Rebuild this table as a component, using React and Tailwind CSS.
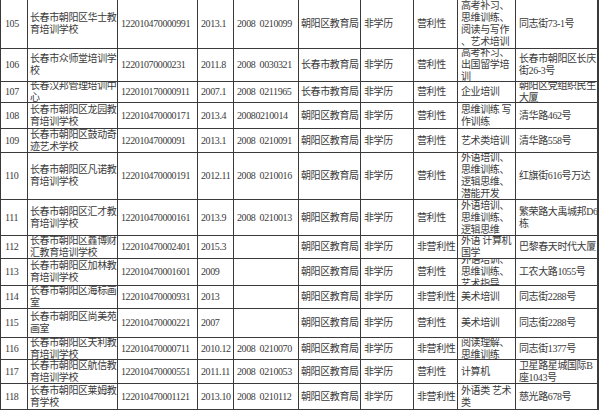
import React from "react";

const rows = [
  { n: "105", h: 49, name: ["长春市朝阳区华士教", "育培训学校"], code: "122010470000991", date: "2013.1", cert: "2008  0210099", dept: "朝阳区教育局", type: "营利性", scope: ["高考补习、", "思维训练、", "阅读与写作", "、艺术培训"], addr: ["同志街73-1号"] },
  { n: "106", h: 33, name: ["长春市众师堂培训学", "校"], code: "12201070000231", date: "2011.8", cert: "2008  0030321", dept: "长春市教育局", type: "营利性", scope: ["高考补习、", "出国留学培", "训"], addr: ["长春市朝阳区长庆", "街26-3号"] },
  { n: "107", h: 21, name: ["长春汉邦管理培训中", "心"], code: "122010170000911", date: "2007.1", cert: "2008  0211965", dept: "长春市教育局", type: "营利性", scope: ["企业培训"], addr: ["朝阳区党组织民生", "大厦"] },
  { n: "108", h: 26, name: ["长春市朝阳区龙园教", "育培训学校"], code: "122010470000171", date: "2013.4", cert: "20080210014", dept: "朝阳区教育局", type: "营利性", scope: ["思维训练 写", "作训练"], addr: ["清华路462号"] },
  { n: "109", h: 24, name: ["长春市朝阳区鼓动奇", "迹艺术学校"], code: "12201047000091", date: "2013.1", cert: "2008  0210091", dept: "朝阳区教育局", type: "营利性", scope: ["艺术类培训"], addr: ["清华路558号"] },
  { n: "110", h: 47, name: ["长春市朝阳区凡诺教", "育培训学校"], code: "122010470000191", date: "2012.11", cert: "2008  0210016", dept: "朝阳区教育局", type: "营利性", scope: ["外语培训、", "思维训练、", "逻辑思维、", "潜能开发"], addr: ["红旗街616号万达"] },
  { n: "111", h: 36, name: ["长春市朝阳区汇才教", "育培训学校"], code: "122010470000161", date: "2013.9", cert: "2008  0210013", dept: "朝阳区教育局", type: "营利性", scope: ["外语培训、", "思维训练、", "逻辑思维"], addr: ["繁荣路大禹城邦D6", "栋"] },
  { n: "112", h: 23, name: ["长春市朝阳区鑫博财", "汇教育培训学校"], code: "122010470002401", date: "2015.3", cert: "", dept: "朝阳区教育局", type: "非营利性", scope: ["外语 计算机", "国学"], addr: ["巴黎春天时代大厦"] },
  { n: "113", h: 27, name: ["长春市朝阳区加林教", "育培训学校"], code: "122010470001601", date: "2009", cert: "", dept: "朝阳区教育局", type: "营利性", scope: ["外语培训、", "思维训练、", "艺术指导"], addr: ["工农大路1055号"] },
  { n: "114", h: 23, name: ["长春市朝阳区海标画", "室"], code: "122010470000931", date: "2013", cert: "", dept: "朝阳区教育局", type: "非营利性", scope: ["美术培训"], addr: ["同志街2288号"] },
  { n: "115", h: 29, name: ["长春市朝阳区尚美苑", "画室"], code: "122010470000221", date: "2007", cert: "", dept: "朝阳区教育局", type: "营利性", scope: ["美术培训"], addr: ["同志街2288号"] },
  { n: "116", h: 22, name: ["长春市朝阳区天利教", "育培训学校"], code: "122010470000711", date: "2010.12", cert: "2008  0210070", dept: "朝阳区教育局", type: "非营利性", scope: ["阅读理解、", "思维训练"], addr: ["同志街1377号"] },
  { n: "117", h: 24, name: ["长春市朝阳区航信教", "育培训学校"], code: "122010470000551", date: "2011.11", cert: "2008  0210053", dept: "朝阳区教育局", type: "营利性", scope: ["计算机"], addr: ["卫星路星城国际B", "座1043号"] },
  { n: "118", h: 26, name: ["长春市朝阳区莱姆教", "育学校"], code: "122010470001121", date: "2013.10", cert: "2008  0210112", dept: "朝阳区教育局", type: "非营利性", scope: ["外语类 艺术", "类"], addr: ["慈光路678号"] },
];

function Cell({ lines, last, pad = "pl-[3px]" }) {
  const arr = Array.isArray(lines) ? lines : [lines];
  return (
    <div
      className={`flex items-center overflow-hidden border-[#3a3a3a] ${pad} ${last ? "border-r-2" : "border-r"}`}
    >
      <div className="whitespace-pre">
        {arr.map((l, i) => (
          <div key={i}>{l}</div>
        ))}
      </div>
    </div>
  );
}

export default function App() {
  return (
    <div className="w-[600px] h-[413px] bg-white overflow-hidden">
      <div
        className="w-[599px] border-l border-[#3a3a3a] text-[10px] tracking-[-0.4px] leading-[12px] text-[#3a3a3a]"
        style={{ fontFamily: '"Liberation Serif", "Noto Sans CJK SC", serif' }}
      >
        {rows.map((r) => (
          <div
            key={r.n}
            className="grid grid-cols-[27px_90px_80px_36px_65px_62px_53px_44px_58px_83px] border-b border-[#3a3a3a]"
            style={{ height: r.h }}
          >
            <Cell lines={r.n} pad="pl-[4px]" />
            <Cell lines={r.name} pad="pl-[2px]" />
            <Cell lines={r.code} />
            <Cell lines={r.date} />
            <Cell lines={r.cert} />
            <Cell lines={r.dept} pad="pl-[2px]" />
            <Cell lines="非学历" />
            <Cell lines={r.type} />
            <Cell lines={r.scope} />
            <Cell lines={r.addr} last />
          </div>
        ))}
      </div>
    </div>
  );
}
